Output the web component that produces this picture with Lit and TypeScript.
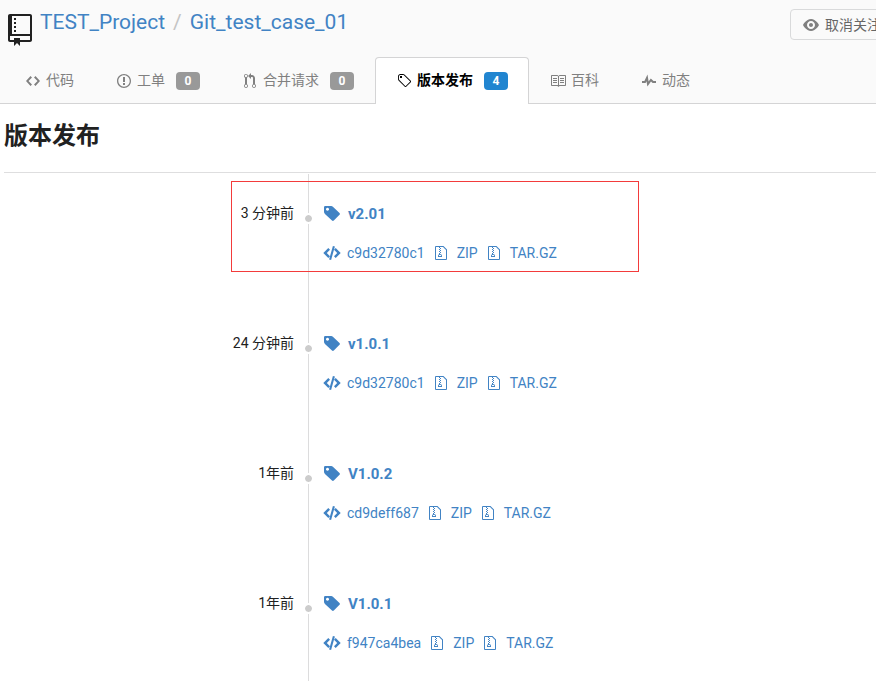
import { LitElement, html, css, svg } from "lit";
import { customElement, property } from "lit/decorators.js";

interface Glyph {
  w: number;
  h: number;
  d: string;
}

const glyphs: Record<string, Glyph> = {
  repo: { w: 12, h: 16, d: "M4 9H3V8h1v1zm0-3H3v1h1V6zm0-2H3v1h1V4zm0-2H3v1h1V2zm8-1v12c0 .55-.45 1-1 1H6v2l-1.5-1.5L3 16v-2H1c-.55 0-1-.45-1-1V1c0-.55.45-1 1-1h10c.55 0 1 .45 1 1zm-1 10H1v2h2v-1h3v1h5v-2zm0-10H2v9h9V1z" },
  code: { w: 14, h: 16, d: "M9.5 3L8 4.5 11.5 8 8 11.5 9.5 13 14 8 9.5 3zm-5 0L0 8l4.5 5L6 11.5 2.5 8 6 4.5 4.5 3z" },
  issue: { w: 14, h: 16, d: "M7 2.3c3.14 0 5.7 2.56 5.7 5.7s-2.56 5.7-5.7 5.7A5.71 5.71 0 0 1 1.3 8c0-3.14 2.56-5.7 5.7-5.7zM7 1C3.14 1 0 4.14 0 8s3.14 7 7 7 7-3.14 7-7-3.14-7-7-7zm1 3H6v5h2V4zm0 6H6v2h2v-2z" },
  pull: { w: 12, h: 16, d: "M11 11.28V5c-.03-.78-.34-1.47-.94-2.06C9.46 2.35 8.78 2.03 8 2H7V0L4 3l3 3V4h1c.27.02.48.11.69.31.21.2.3.42.31.69v6.28A1.993 1.993 0 0 0 10 15a1.993 1.993 0 0 0 1-3.72zm-1 2.92c-.66 0-1.2-.55-1.2-1.2 0-.65.55-1.2 1.2-1.2.65 0 1.2.55 1.2 1.2 0 .65-.55 1.2-1.2 1.2zM4 3c0-1.11-.89-2-2-2a1.993 1.993 0 0 0-1 3.72v6.56A1.993 1.993 0 0 0 2 15a1.993 1.993 0 0 0 1-3.72V4.72c.59-.34 1-.98 1-1.72zm-.8 10c0 .66-.55 1.2-1.2 1.2-.65 0-1.2-.55-1.2-1.2 0-.65.55-1.2 1.2-1.2.65 0 1.2.55 1.2 1.2zM2 4.2C1.34 4.2.8 3.65.8 3c0-.65.55-1.2 1.2-1.2.65 0 1.2.55 1.2 1.2 0 .65-.55 1.2-1.2 1.2z" },
  tag: { w: 14, h: 16, d: "M7.73 1.73C7.26 1.26 6.62 1 5.96 1H3.5C2.13 1 1 2.13 1 3.5v2.47c0 .66.27 1.3.73 1.77l6.06 6.06c.39.39 1.02.39 1.41 0l4.59-4.59a.996.996 0 0 0 0-1.41L7.73 1.73zM2.38 7.09c-.31-.3-.47-.7-.47-1.13V3.5c0-.88.72-1.59 1.59-1.59h2.47c.42 0 .83.16 1.13.47l6.14 6.13-4.73 4.73-6.13-6.15zM3.01 3h2v2H3V3h.01z" },
  book: { w: 16, h: 16, d: "M3 5h4v1H3V5zm0 3h4V7H3v1zm0 2h4V9H3v1zm11-5h-4v1h4V5zm0 2h-4v1h4V7zm0 2h-4v1h4V9zm2-6v9c0 .55-.45 1-1 1H9.5l-1 1-1-1H2c-.55 0-1-.45-1-1V3c0-.55.45-1 1-1h5.5l1 1 1-1H15c.55 0 1 .45 1 1zm-8 .5L7.5 3H2v9h6V3.5zm7-.5H9.5l-.5.5V12h6V3z" },
  pulse: { w: 14, h: 16, d: "M11.5 8L8.8 5.4 6.6 8.5 5.5 1.6 2.38 8H0v2h3.6l.9-1.8.9 5.4L9 8.5l1.6 1.5H14V8h-2.5z" },
  eye: { w: 16, h: 16, d: "M8.06 2C3 2 0 8 0 8s3 6 8.06 6C13 14 16 8 16 8s-3-6-7.94-6zM8 12c-2.2 0-4-1.78-4-4 0-2.2 1.8-4 4-4 2.22 0 4 1.8 4 4 0 2.22-1.78 4-4 4zm2-4c0 1.11-.89 2-2 2-1.11 0-2-.89-2-2 0-1.11.89-2 2-2 1.11 0 2 .89 2 2z" },
  zip: { w: 12, h: 16, d: "M8.5 1H1a1 1 0 0 0-1 1v12a1 1 0 0 0 1 1h10a1 1 0 0 0 1-1V4.5L8.5 1zM11 14H1V2h3v1h1V2h3l3 3v9zM5 4V3h1v1H5zM4 4h1v1H4V4zm1 2V5h1v1H5zM4 6h1v1H4V6zm1 2V7h1v1H5zM4 9.28A2 2 0 0 0 3 11v1h4v-1a2 2 0 0 0-2-2V8H4v1.28zM6 10v1H4v-1h2z" },
  tagSolid: { w: 16, h: 16, d: "M1.300 0H7.200Q8.100 0 8.900.8L15.500 7.100Q16.300 7.900 15.500 8.800L9.800 14.500Q8.900 15.300 8 14.500L1.200 8.200Q0 7.100 0 6V1.300Q0 0 1.300 0ZM3.500 1.700a1.500 1.500 0 1 0 .01 0z" },
  codeSlash: { w: 18, h: 14, d: "M5.300 2L7 3.700 3.800 7 7 10.300 5.300 12 .3 7zM12.700 2L11 3.700 14.200 7 11 10.300 12.700 12 17.700 7zM9.900 0L11.900.5 8.100 14 6.100 13.500z" },
};

@customElement("app-icon")
export class AppIcon extends LitElement {
  @property() name = "code";
  @property({ type: Number }) scale = 1;

  static styles = css`
    :host {
      display: inline-flex;
      flex: none;
      justify-content: center;
    }
    .glyph {
      display: block;
      flex: none;
      fill: currentColor;
      fill-rule: evenodd;
    }
  `;

  render() {
    const g = glyphs[this.name];
    return html`<svg
      class="glyph"
      aria-hidden="true"
      width=${g.w * this.scale}
      height=${g.h * this.scale}
      viewBox="0 0 ${g.w} ${g.h}"
    >${svg`<path d=${g.d}></path>`}</svg>`;
  }
}

interface Tab {
  icon: string;
  label: string;
  count?: number;
  active?: boolean;
}

const tabs: Tab[] = [
  { icon: "code", label: "代码" },
  { icon: "issue", label: "工单", count: 0 },
  { icon: "pull", label: "合并请求", count: 0 },
  { icon: "tag", label: "版本发布", count: 4, active: true },
  { icon: "book", label: "百科" },
  { icon: "pulse", label: "动态" },
];

interface Release {
  when: string;
  name: string;
  commit: string;
  marked?: boolean;
}

const releases: Release[] = [
  { when: "3 分钟前", name: "v2.01", commit: "c9d32780c1", marked: true },
  { when: "24 分钟前", name: "v1.0.1", commit: "c9d32780c1" },
  { when: "1年前", name: "V1.0.2", commit: "cd9deff687" },
  { when: "1年前", name: "V1.0.1", commit: "f947ca4bea" },
];

@customElement("app-root")
export class AppRoot extends LitElement {
  static styles = css`
    :host {
      display: block;
      min-height: 100vh;
      overflow: hidden;
      background: #fff;
      color: #212121;
      font: 14px/20px Roboto, "Noto Sans CJK SC", sans-serif;
    }
    a {
      color: #4183c4;
      text-decoration: none;
    }
    .header {
      background: #fafafa;
      border-bottom: 1px solid #d4d4d5;
    }
    .bar {
      display: flex;
      align-items: flex-start;
      justify-content: space-between;
      min-width: 896px;
      height: 57px;
      padding-left: 8px;
      box-sizing: border-box;
    }
    .repo {
      display: flex;
      gap: 8px;
    }
    .repo app-icon {
      margin-top: 14px;
    }
    .path {
      display: flex;
      gap: 8px;
      margin: 8px 0 0;
      font-size: 21px;
      line-height: 28px;
      font-weight: 400;
    }
    .slash {
      color: #c4c4c4;
    }
    .watch {
      display: flex;
      align-items: center;
      gap: 6px;
      width: 106px;
      height: 31px;
      margin-top: 9px;
      padding: 0 12px;
      border: 1px solid #d9dadb;
      border-radius: 4px;
      background: transparent;
      color: #666;
      font: inherit;
      white-space: nowrap;
    }
    .watch app-icon {
      color: #808080;
    }
    .tabs {
      display: flex;
      padding-left: 4px;
      margin-bottom: -1px;
    }
    .tab {
      display: flex;
      align-items: center;
      gap: 6px;
      height: 46px;
      padding: 0 20px 0 21px;
      border: 1px solid transparent;
      border-bottom: 0;
      border-radius: 4px 4px 0 0;
      color: #808080;
      white-space: nowrap;
    }
    .tab app-icon {
      width: 14px;
    }
    .label {
      padding-bottom: 2px;
    }
    .active {
      background: #fff;
      border-color: #d4d4d5;
      color: #000;
      font-weight: 700;
    }
    .count {
      min-width: 24px;
      margin-left: 5px;
      border-radius: 4px;
      background: #999;
      color: #fff;
      font-size: 12px;
      line-height: 18px;
      font-weight: 700;
      text-align: center;
    }
    .active .count {
      background: #2185d0;
    }
    .main {
      padding-left: 4px;
    }
    .title {
      margin: 0;
      padding: 16px 0 20px;
      border-bottom: 1px solid #dededf;
      font-size: 24px;
      line-height: 32px;
      font-weight: 700;
    }
    .list {
      margin: 1px 0 0;
      padding: 0;
      list-style: none;
    }
    .release {
      position: relative;
      display: grid;
      grid-template-columns: 304px 1fr;
      min-height: 130px;
    }
    .when {
      padding: 29px 14px 0 0;
      text-align: right;
    }
    .detail {
      position: relative;
      padding: 30px 0 0 14px;
      border-left: 1px solid #dcdcdd;
    }
    .dot {
      position: absolute;
      top: 39px;
      left: -6px;
      width: 7px;
      height: 7px;
      border: 2px solid #fff;
      border-radius: 50%;
      background: #ccc;
      background-clip: padding-box;
    }
    .name {
      display: flex;
      align-items: center;
      gap: 8px;
      margin: 0 0 19px;
      padding-left: 1px;
      font-size: 15px;
      line-height: 20px;
      font-weight: 700;
      color: #4183c4;
    }
    .files {
      display: flex;
      align-items: center;
      gap: 10px;
    }
    .file {
      display: flex;
      align-items: center;
      gap: 10px;
    }
    .commit {
      gap: 6px;
    }
    .frame {
      position: absolute;
      top: 7px;
      left: 227px;
      width: 406px;
      height: 89px;
      border: 1px solid #f33b3b;
      pointer-events: none;
    }
  `;

  private tab(t: Tab) {
    return html`<a class="tab ${t.active ? "active" : ""}" href="#">
      <app-icon name=${t.icon}></app-icon>
      <span class="label">${t.label}</span>
      ${t.count === undefined ? "" : html`<span class="count">${t.count}</span>`}
    </a>`;
  }

  private release(r: Release) {
    return html`<li class="release">
      <span class="when">${r.when}</span>
      <div class="detail">
        <span class="dot"></span>
        <h4 class="name">
          <app-icon name="tagSolid"></app-icon>
          <a href="#">${r.name}</a>
        </h4>
        <div class="files">
          <a class="file commit" href="#"><app-icon name="codeSlash"></app-icon>${r.commit}</a>
          <a class="file" href="#"><app-icon name="zip"></app-icon>ZIP</a>
          <a class="file" href="#"><app-icon name="zip"></app-icon>TAR.GZ</a>
        </div>
      </div>
      ${r.marked ? html`<span class="frame"></span>` : ""}
    </li>`;
  }

  render() {
    return html`
      <header class="header">
        <div class="bar">
          <div class="repo">
            <app-icon name="repo" scale="2"></app-icon>
            <h1 class="path">
              <a href="#">TEST_Project</a>
              <span class="slash">/</span>
              <a href="#">Git_test_case_01</a>
            </h1>
          </div>
          <button class="watch" type="button">
            <app-icon name="eye"></app-icon>
            <span>取消关注</span>
          </button>
        </div>
        <nav class="tabs">${tabs.map((t) => this.tab(t))}</nav>
      </header>
      <main class="main">
        <h2 class="title">版本发布</h2>
        <ul class="list">${releases.map((r) => this.release(r))}</ul>
      </main>
    `;
  }
}
